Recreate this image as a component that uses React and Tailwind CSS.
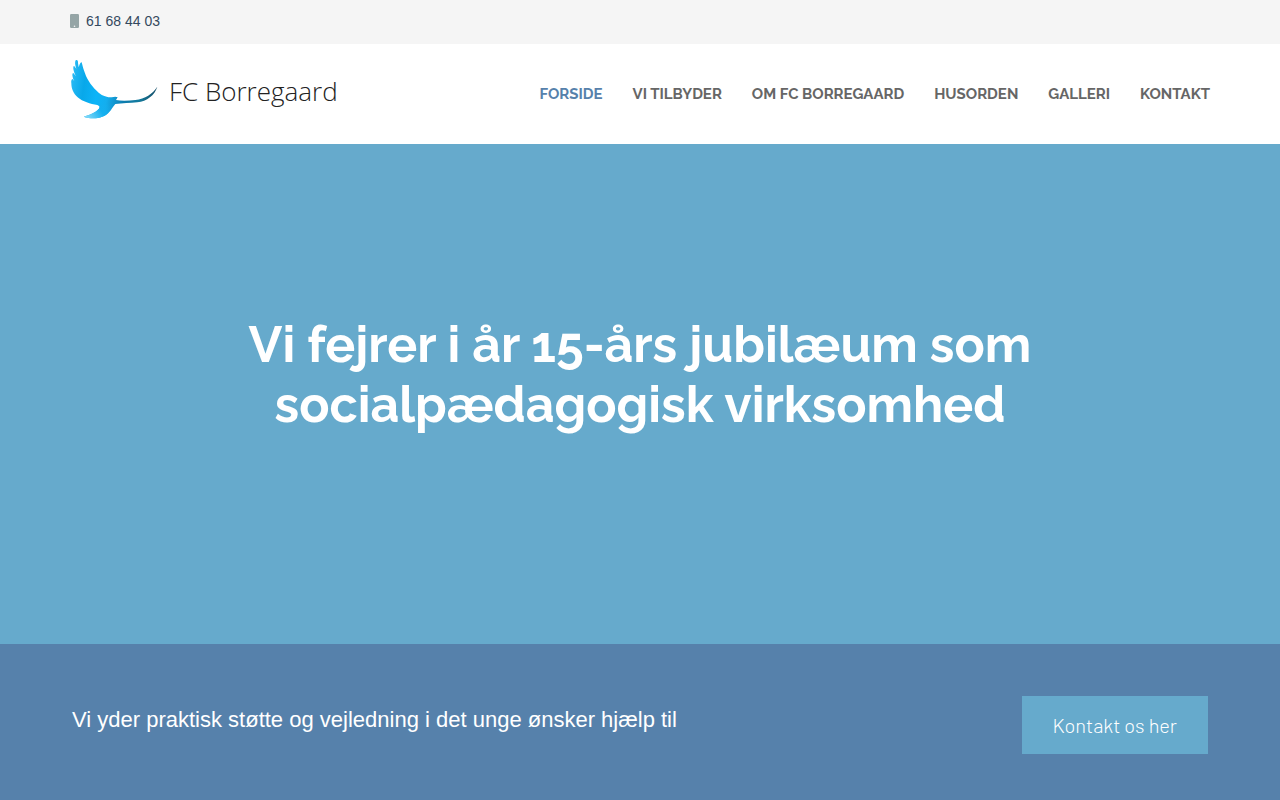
const links = [
  "FORSIDE",
  "VI TILBYDER",
  "OM FC BORREGAARD",
  "HUSORDEN",
  "GALLERI",
  "KONTAKT",
];

function PhoneIcon() {
  return (
    <svg className="h-[14px] w-[9px]" viewBox="0 0 9 14" aria-hidden="true">
      <rect width="9" height="14" rx="1.2" fill="#95a5a6" />
      <circle cx="4.5" cy="12.2" r="0.8" fill="#f5f5f5" />
    </svg>
  );
}

function BirdLogo() {
  return (
    <svg className="h-[60px] w-[88px]" viewBox="30 27 264 180" aria-hidden="true">
      <defs>
        <linearGradient id="wing" gradientUnits="userSpaceOnUse" x1="34" y1="110" x2="292" y2="150">
          <stop offset="0" stopColor="#25b8f3" />
          <stop offset="0.14" stopColor="#08a8ea" />
          <stop offset="0.3" stopColor="#0cb4f8" />
          <stop offset="0.42" stopColor="#14aeee" />
          <stop offset="0.52" stopColor="#1295cf" />
          <stop offset="0.62" stopColor="#0c7cae" />
          <stop offset="0.8" stopColor="#147a9c" />
          <stop offset="1" stopColor="#164a63" />
        </linearGradient>
        <linearGradient id="tail" gradientUnits="userSpaceOnUse" x1="150" y1="160" x2="76" y2="204">
          <stop offset="0" stopColor="#14aeee" stopOpacity="0" />
          <stop offset="0.4" stopColor="#14b0f0" />
          <stop offset="1" stopColor="#8bdcf8" />
        </linearGradient>
      </defs>
      <path
        fill="url(#wing)"
        d="M47 31C51 28 55 32 54 39L56 52C59 43 61 36 65 37C68 48 70 58 75 70C82 91 98 113 116 128C128 138 142 142 155 142C163 140 169 140 173 142L168 150C184 153 206 152 226 150C255 146 278 132 292 110C284 136 261 153 232 157C210 160 188 159 166 162C159 169 155 179 147 187C136 199 119 205 100 205C90 205 80 203 71 200C89 196 107 187 116 177C120 172 120 167 112 165C91 162 68 155 53 142C40 131 34 116 34 100C33 94 34 88 38 87L43 94C37 82 35 70 40 69L48 79C40 63 38 51 42 47L49 56C45 46 44 36 47 31Z"
      />
      <path
        fill="url(#tail)"
        d="M71 200C89 196 107 187 116 177C120 172 120 167 112 165L166 162C159 169 155 179 147 187C136 199 119 205 100 205C90 205 80 203 71 200Z"
      />
    </svg>
  );
}

export default function App() {
  return (
    <div className="flex min-h-screen flex-col bg-white font-['Liberation_Sans',Arial,sans-serif]">
      <div className="bg-[#f5f5f5] px-[70px]">
        <a href="tel:61684403" className="flex h-11 items-center gap-[7px] pb-[2px] text-sm text-[#34495e]">
          <PhoneIcon />
          61 68 44 03
        </a>
      </div>

      <header className="flex h-[100px] items-center justify-between bg-white px-[70px]">
        <a href="#forside" className="flex items-center gap-[11px] pb-[10px]">
          <BirdLogo />
          <span className="whitespace-nowrap pt-1 font-['Open_Sans',sans-serif] text-[26px] leading-9 font-light text-[#222222]">
            FC Borregaard
          </span>
        </a>
        <nav className="flex gap-[30px] whitespace-nowrap font-['Raleway','Lato',sans-serif] text-[15px] leading-6 font-bold text-[#666666]">
          {links.map((label, i) => (
            <a
              key={label}
              href={"#" + label.toLowerCase().replaceAll(" ", "-")}
              className={i === 0 ? "text-[#5681ab]" : "hover:text-[#5681ab]"}
            >
              {label}
            </a>
          ))}
        </nav>
      </header>

      <main className="flex flex-1 flex-col">
        <section className="flex h-[500px] items-center justify-center bg-[#66aacc] px-[70px] pb-[38px]">
          <h1 className="text-center font-['Raleway','Lato',sans-serif] text-[50px] leading-[60px] font-bold text-white">
            Vi fejrer i år 15-års jubilæum som
            <br />
            socialpædagogisk virksomhed
          </h1>
        </section>

        <section className="flex flex-1 items-start justify-between bg-[#5681ab] px-[72px] pt-[52px] pb-[46px]">
          <p className="pt-2 text-[22px] leading-8 text-white">
            Vi yder praktisk støtte og vejledning i det unge ønsker hjælp til
          </p>
          <a
            href="#kontakt"
            className="bg-[#66aacc] px-[31px] py-[14px] font-['Barlow','Roboto',sans-serif] text-xl leading-[30px] font-light whitespace-nowrap text-white"
          >
            Kontakt os her
          </a>
        </section>
      </main>
    </div>
  );
}
